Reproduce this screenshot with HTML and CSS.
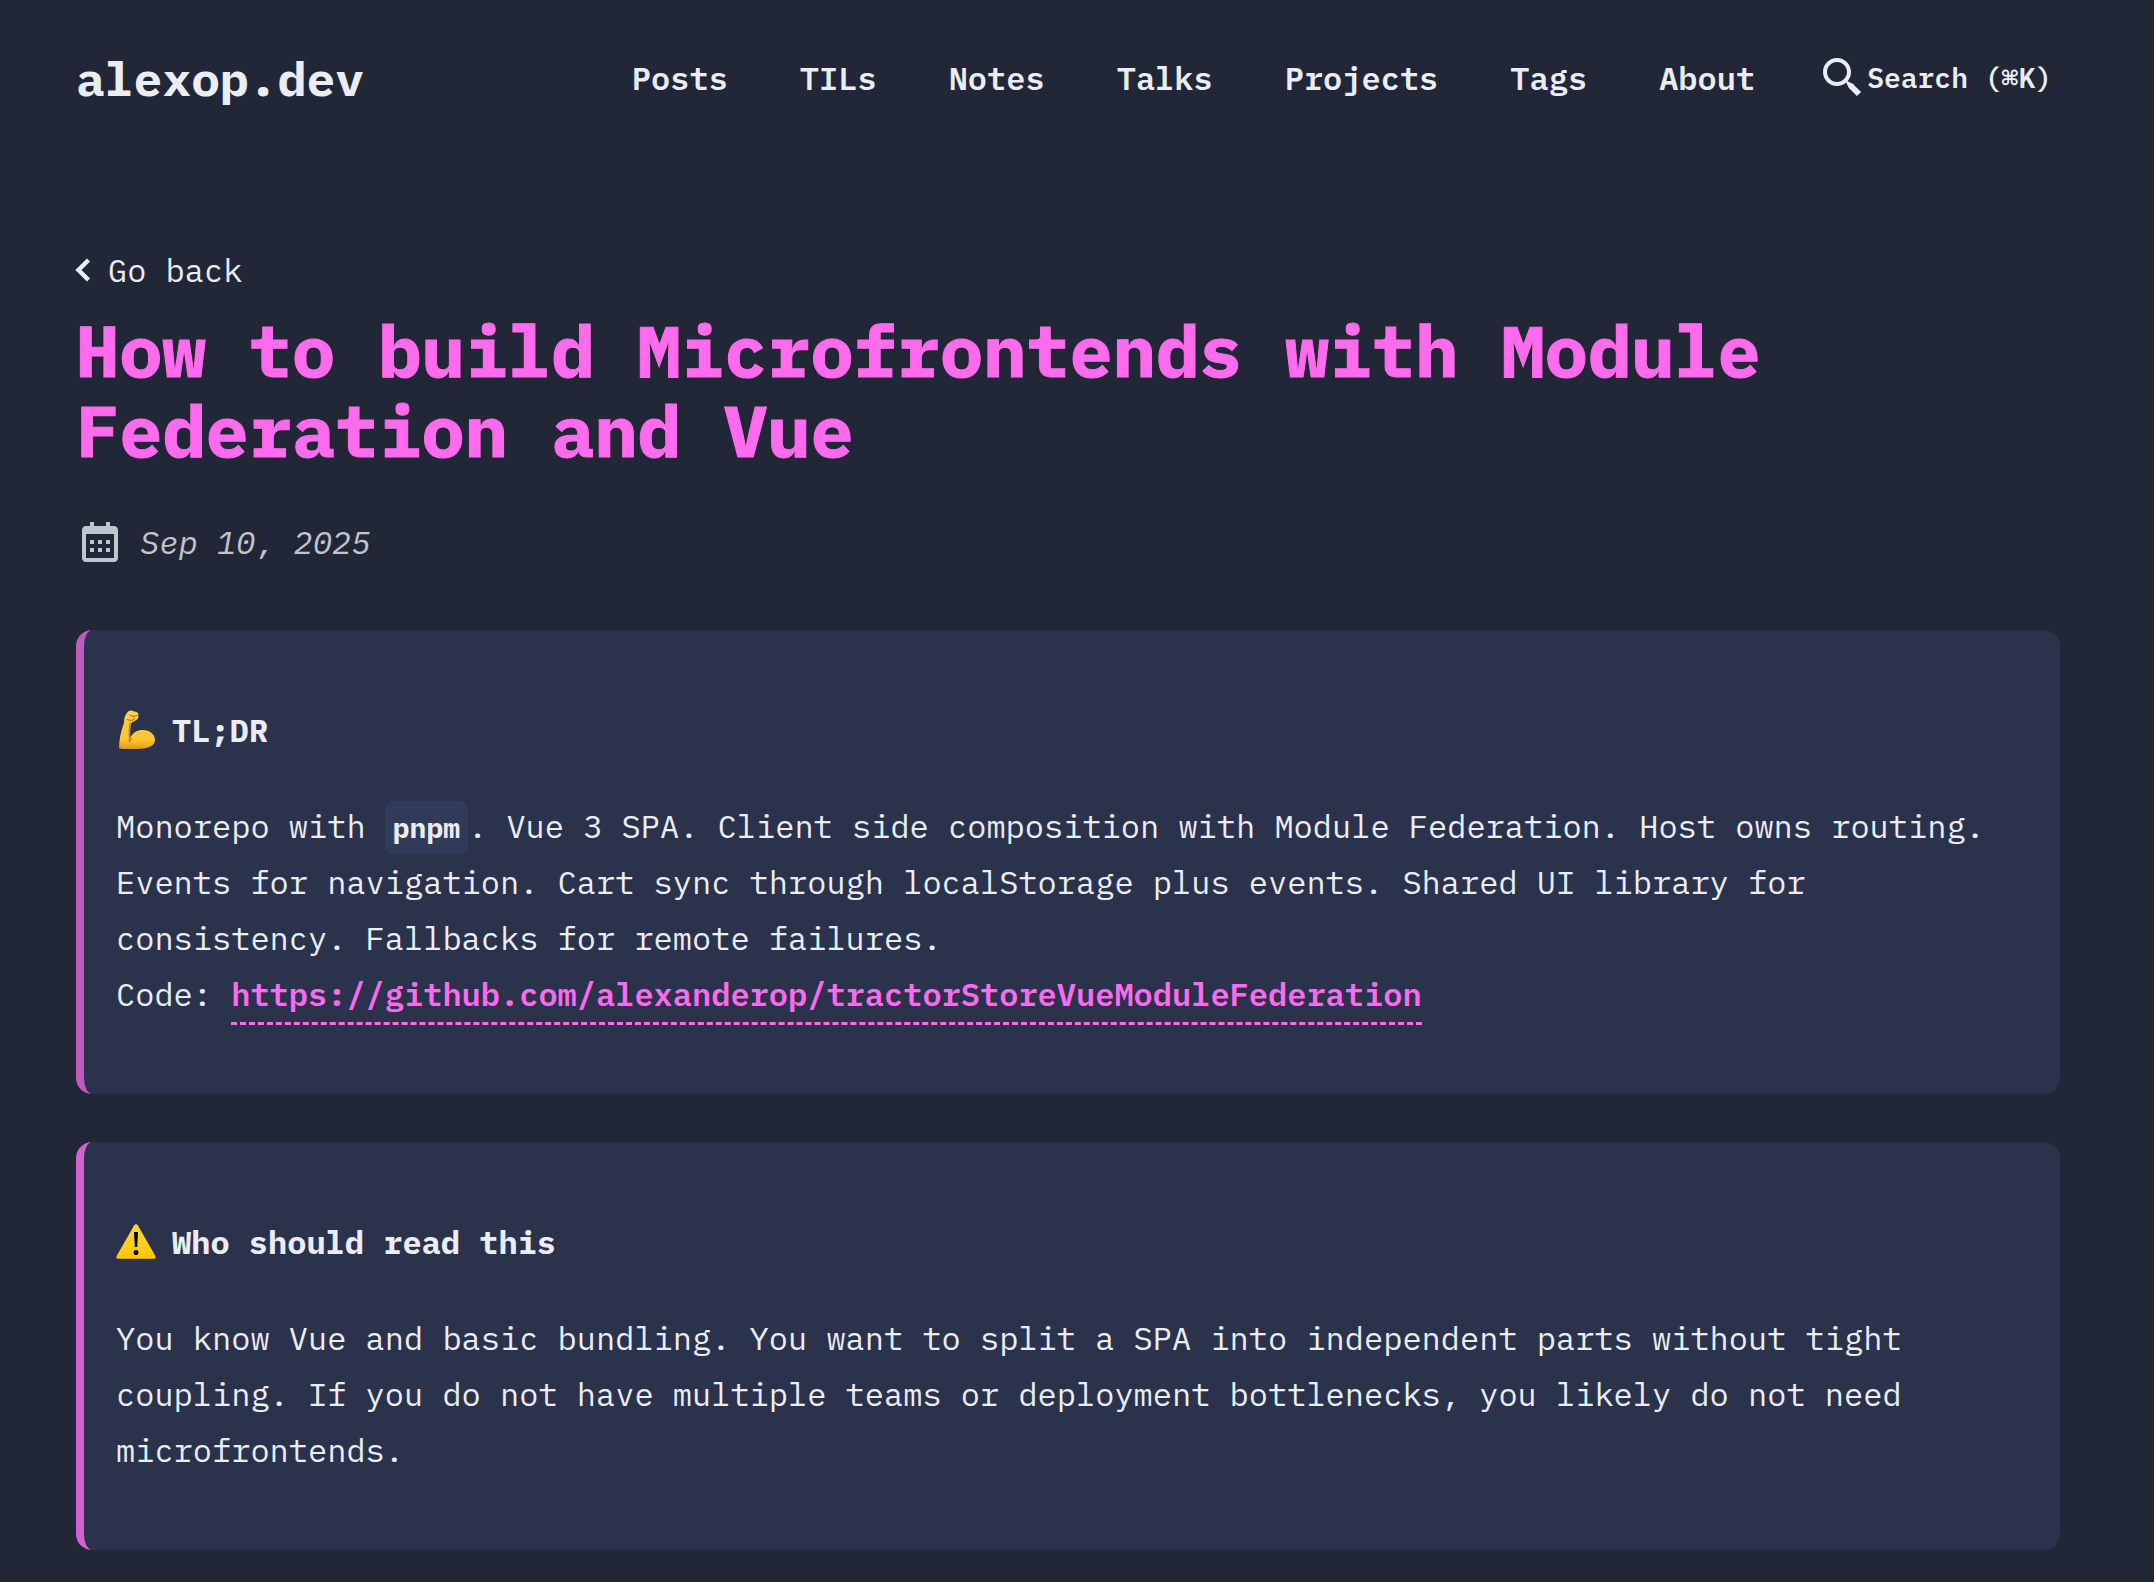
FILE: index.html
```html
<!DOCTYPE html>
<html lang="en">
<head>
<meta charset="utf-8">
<meta name="viewport" content="width=device-width, initial-scale=1">
<title>How to build Microfrontends with Module Federation and Vue</title>
<link rel="stylesheet" href="styles.css">
</head>
<body>
<header class="site-header">
  <a class="logo" href="#">alexop.dev</a>
  <nav class="nav" aria-label="Main">
    <ul class="nav-list">
      <li><a href="#">Posts</a></li>
      <li><a href="#">TILs</a></li>
      <li><a href="#">Notes</a></li>
      <li><a href="#">Talks</a></li>
      <li><a href="#">Projects</a></li>
      <li><a href="#">Tags</a></li>
      <li><a href="#">About</a></li>
    </ul>
    <button class="search" type="button">
      <svg class="icon" viewBox="0 0 24 24" aria-hidden="true"><path d="M19.023 16.977a35.13 35.13 0 0 1-1.367-1.384c-.372-.378-.596-.653-.596-.653l-2.8-1.337A6.962 6.962 0 0 0 16 9c0-3.859-3.14-7-7-7S2 5.141 2 9s3.14 7 7 7c1.763 0 3.37-.66 4.603-1.739l1.337 2.8s.275.224.653.596c.387.363.896.854 1.384 1.367l1.358 1.392.604.646 2.121-2.121-.646-.604c-.379-.372-.885-.866-1.391-1.36zM9 14c-2.757 0-5-2.243-5-5s2.243-5 5-5 5 2.243 5 5-2.243 5-5 5z"/></svg>
      <span>Search (⌘K)</span>
    </button>
  </nav>
</header>
<main class="post">
  <a class="back" href="#">
    <svg class="chevron" viewBox="0 0 16 24" aria-hidden="true"><path d="M12.500 2 2.500 12l10 10" fill="none" stroke="currentColor" stroke-width="4.500"/></svg>
    <span>Go back</span>
  </a>
  <h1 class="title">How to build Microfrontends with Module Federation and Vue</h1>
  <div class="date">
    <svg class="icon" viewBox="0 0 24 24" aria-hidden="true"><path d="M7 11h2v2H7zm0 4h2v2H7zm4-4h2v2h-2zm0 4h2v2h-2zm4-4h2v2h-2zm0 4h2v2h-2z"/><path d="M5 22h14c1.103 0 2-.897 2-2V6c0-1.103-.897-2-2-2h-2V2h-2v2H9V2H7v2H5c-1.103 0-2 .897-2 2v14c0 1.103.897 2 2 2zM19 8l.001 12H5V8h14z"/></svg>
    <time datetime="2025-09-10">Sep 10, 2025</time>
  </div>
  <aside class="card card-tldr">
    <h2 class="card-title">
      <svg class="emoji" viewBox="0 0 40 40" aria-hidden="true">
        <defs><linearGradient id="skin" x1="0" y1="0" x2="0" y2="1"><stop offset="0" stop-color="#ffd047"/><stop offset=".75" stop-color="#ffc530"/><stop offset="1" stop-color="#e09a1c"/></linearGradient></defs>
        <path d="M3.200 38.500C3 28 5.500 20 8 13c0-4 .5-7 2.500-9.500C12 1 14 0 16 .8l5 1.400c1.600.7 1.700 2 1.200 3.300.6 1.500.2 3-1 3.800-2.200 1.800-4.700 2.500-6.200 4.200-.8 4-1 9.500-.7 14.500C16.500 22.500 21 20 27 20c7 0 12 4.500 12 10 0 6-7 9-18 9-7 0-13 .4-17.800-.5z" fill="url(#skin)"/>
        <path d="M14.300 12.500c-1.200 5-1.400 11-.8 19 1-1 1.500-2 2-3M14 5l3.500 1.500 3.700-1M11.500 9.500c2.500 1.500 5 1 7-.8" fill="none" stroke="#c4781a" stroke-width="1.200" stroke-linecap="round"/>
      </svg>
      <span>TL;DR</span>
    </h2>
    <p class="card-text">Monorepo with <code>pnpm</code>. Vue 3 SPA. Client side composition with Module Federation. Host owns routing. Events for navigation. Cart sync through localStorage plus events. Shared UI library for consistency. Fallbacks for remote failures.<br>Code: <a href="https://github.com/alexanderop/tractorStoreVueModuleFederation">https://github.com/alexanderop/tractorStoreVueModuleFederation</a></p>
  </aside>
  <aside class="card card-audience">
    <h2 class="card-title">
      <svg class="emoji" viewBox="0 0 40 40" aria-hidden="true">
        <defs><linearGradient id="sign" x1="0" y1="0" x2="0" y2="1"><stop offset="0" stop-color="#ffd83a"/><stop offset="1" stop-color="#ffc800"/></linearGradient></defs>
        <path d="M18.300 3.500c.8-1.400 2.600-1.400 3.400 0l17.700 31c.7 1.300.1 2.500-1.400 2.500H2c-1.500 0-2.100-1.200-1.400-2.500z" fill="#d99a08"/>
        <path d="M18.300 3.300c.8-1.400 2.600-1.400 3.400 0l17.500 30.500c.7 1.300.1 2.200-1.400 2.200H2.200c-1.500 0-2.100-.9-1.400-2.200z" fill="url(#sign)"/>
        <path d="M18 10h4l-.8 15h-2.400z"/><circle cx="20" cy="30.500" r="2.500"/>
      </svg>
      <span>Who should read this</span>
    </h2>
    <p class="card-text">You know Vue and basic bundling. You want to split a SPA into independent parts without tight coupling. If you do not have multiple teams or deployment bottlenecks, you likely do not need microfrontends.</p>
  </aside>
</main>
</body>
</html>
```

FILE: styles.css
```css
:root {
  --fill: #212737;
  --text: #eaedf3;
  --accent: #ff6bed;
  --card: #2b324b;
  --code: #2f3b58;
}

* {
  box-sizing: border-box;
}

body {
  margin: 0;
  padding: 0 94px 0 76px;
  background: var(--fill);
  color: var(--text);
  font-family: "IBM Plex Mono", "Liberation Mono", "DejaVu Sans Mono", monospace;
  font-size: 32px;
  line-height: 56px;
}

a {
  color: inherit;
  text-decoration: none;
}

.icon {
  width: 48px;
  height: 48px;
  fill: currentColor;
  flex: none;
}

.site-header {
  display: flex;
  align-items: center;
  justify-content: space-between;
  padding: 46px 0;
}

.logo {
  font-size: 48px;
  line-height: 64px;
  font-weight: 700;
}

.nav {
  display: flex;
  align-items: center;
  gap: 56px;
}

.nav-list {
  display: flex;
  gap: 72px;
  margin: 0;
  padding: 0;
  list-style: none;
  font-weight: 600;
}

.search {
  display: flex;
  align-items: center;
  padding: 0 8px;
  border: 0;
  background: none;
  color: inherit;
  font: inherit;
  font-size: 28px;
  font-weight: 600;
  line-height: 48px;
}

.post {
  padding-top: 86px;
}

.back {
  display: flex;
  align-items: center;
  gap: 16px;
}

.chevron {
  width: 16px;
  height: 24px;
  overflow: visible;
}

.title {
  margin: 12px 0 44px;
  color: var(--accent);
  font-size: 72px;
  line-height: 80px;
  font-weight: 700;
  -webkit-text-stroke: 1px currentColor;
}

.date {
  display: flex;
  align-items: center;
  gap: 16px;
  margin-bottom: 60px;
  font-style: italic;
  opacity: 0.8;
}

.card {
  margin-bottom: 48px;
  padding: 72px 32px;
  border-left: 8px solid;
  border-radius: 16px;
  background: var(--card);
}

.card-tldr {
  border-color: #c15abe;
}

.card-audience {
  border-color: #d560cf;
}

.card-title {
  display: flex;
  align-items: center;
  gap: 16px;
  margin: 0 0 40px;
  font-size: 32px;
  font-weight: 700;
}

.emoji {
  width: 40px;
  height: 40px;
}

.card-text {
  margin: 0;
}

.card-text code {
  padding: 8px;
  border-radius: 8px;
  background: var(--code);
  font-family: inherit;
  font-size: 28px;
  font-weight: 700;
  line-height: 1;
}

.card-text a {
  padding-bottom: 7px;
  border-bottom: 3px dashed;
  color: var(--accent);
  font-weight: 600;
}
```
